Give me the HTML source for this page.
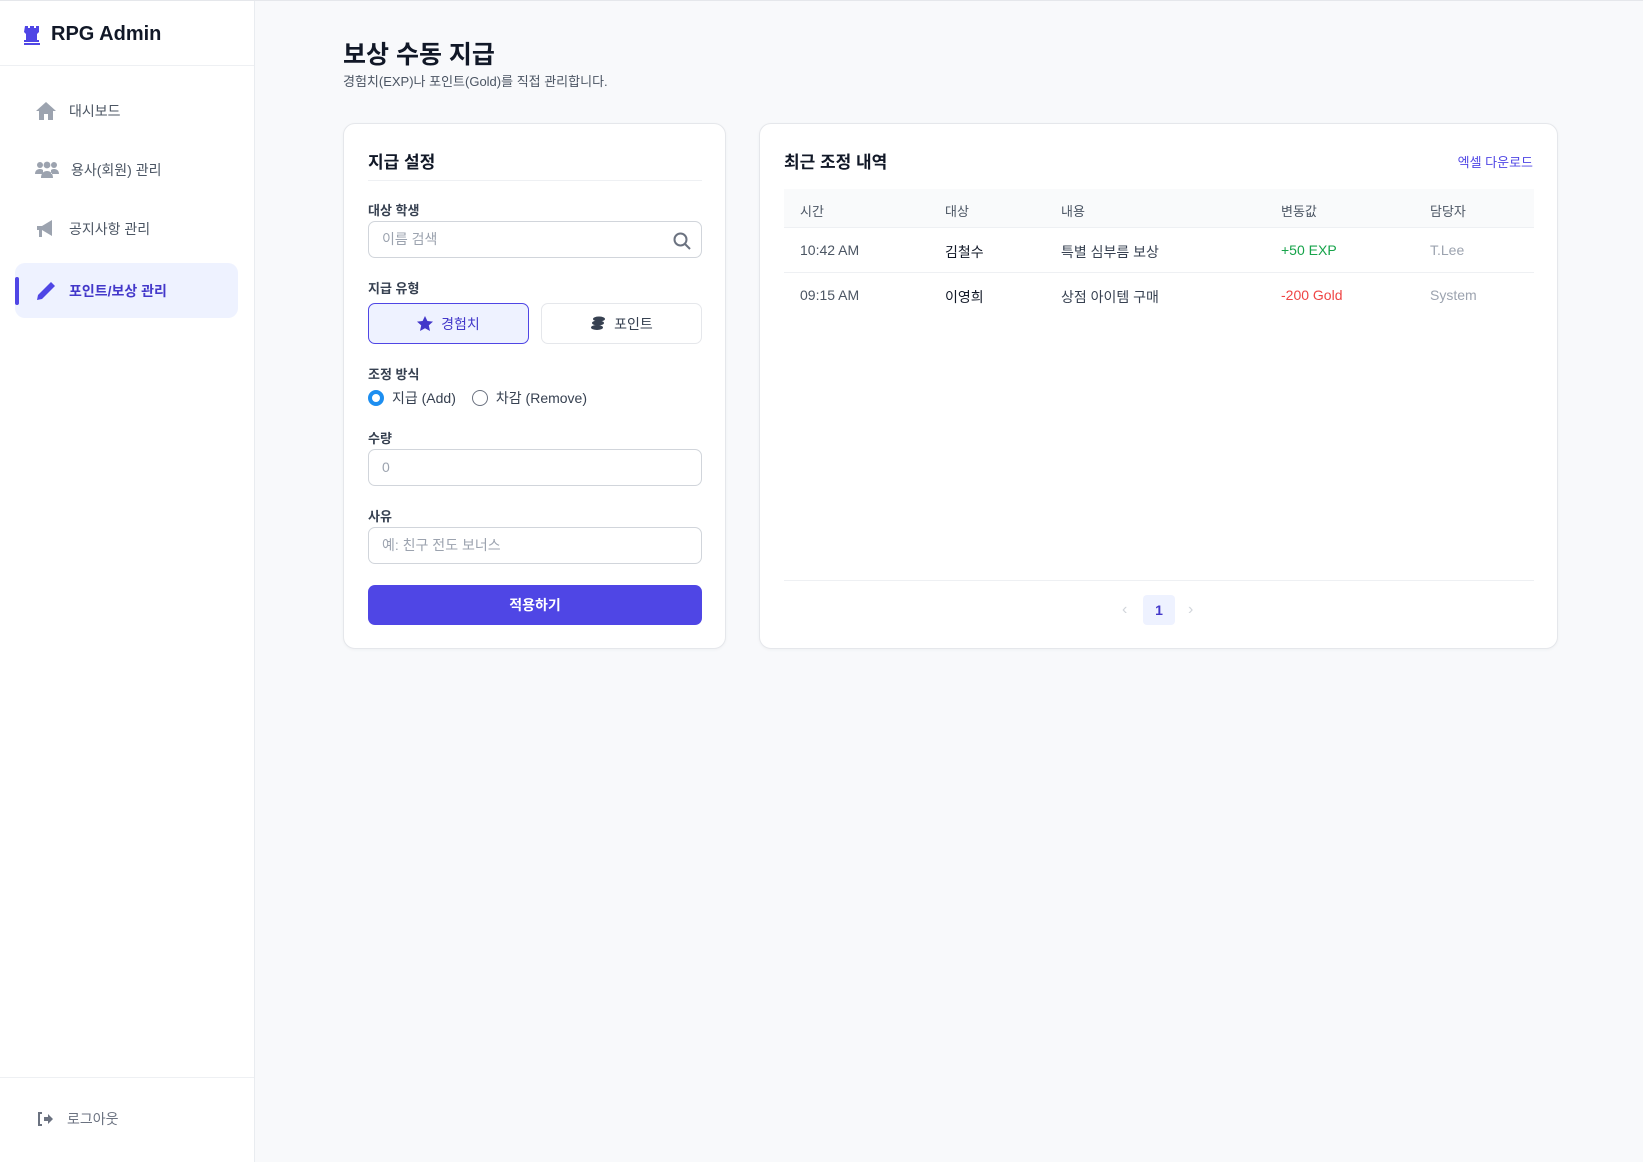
<!DOCTYPE html>
<html><head><meta charset="utf-8"><style>
*{box-sizing:border-box;margin:0;padding:0}
body{width:1643px;height:1161px;background:#f8f9fb;font-family:"Liberation Sans","Noto Sans CJK KR",sans-serif;color:#1f2937;position:relative;overflow:hidden;border-top:1px solid #e5e7eb}
.side{position:absolute;left:0;top:0;width:255px;height:1161px;background:#fff;border-right:1px solid #e9ecf0}
.logo{position:absolute;left:23px;top:22px;font-size:20px;font-weight:700;color:#111827;display:flex;align-items:center;gap:10px}
.hline{position:absolute;left:0;width:254px;height:1px;background:#eef0f3}
.nav{position:absolute;left:15px;width:223px;height:55px;display:flex;align-items:center;padding-left:20px;gap:12px;font-size:14px;color:#4b5563}
.nav.act{background:#eef2ff;color:#4338ca;font-weight:700;border-radius:10px}
.nav.act:before{content:"";position:absolute;left:0;top:14px;width:4px;height:28px;background:#4f46e5;border-radius:2px}
.abs{position:absolute}
.card{position:absolute;background:#fff;border:1px solid #e5e7eb;border-radius:12px;box-shadow:0 1px 3px rgba(0,0,0,.04)}
.lbl{position:absolute;left:24px;font-size:13px;font-weight:700;color:#374151}
.inp{position:absolute;left:24px;width:334px;height:37px;border:1px solid #d1d5db;border-radius:7px;font-size:14px;color:#9ca3af;padding-left:13px;line-height:35px}
.th{position:absolute;font-size:13px;color:#4b5563;top:12px}
.td{position:absolute;font-size:14px}
</style></head><body>
<div class="side">
 <div class="logo"><svg width="18" height="20" viewBox="0 0 18 20"><path d="M2 1h3v2h2V1h4v2h2V1h3v6l-2 2v6h2v2H1v-2h2V9L1 7z" fill="#4f46e5"/><rect x="1" y="18" width="16" height="2" fill="#4f46e5"/></svg>RPG Admin</div>
 <div class="hline" style="top:64px"></div>
 <div class="nav" style="top:82px"><svg width="22" height="20" viewBox="0 0 22 20"><path d="M11 1L1 10h3v9h5v-6h4v6h5v-9h3z" fill="#9ca3af"/></svg>대시보드</div>
 <div class="nav" style="top:141px"><svg width="24" height="18" viewBox="0 0 24 18"><circle cx="5" cy="4" r="3" fill="#9ca3af"/><circle cx="12" cy="4" r="3.4" fill="#9ca3af"/><circle cx="19" cy="4" r="3" fill="#9ca3af"/><path d="M0 13c0-4 3-5 5-5s3 1 3 1v4zM6 17c0-5 3-7 6-7s6 2 6 7zM24 13c0-4-3-5-5-5s-3 1-3 1v4z" fill="#9ca3af"/></svg>용사(회원) 관리</div>
 <div class="nav" style="top:200px"><svg width="22" height="20" viewBox="0 0 22 20"><path d="M2 7h5l10-6v16L7 11v7H4v-7H2z" fill="#9ca3af"/></svg>공지사항 관리</div>
 <div class="nav act" style="top:262px"><svg width="22" height="22" viewBox="0 0 22 22"><path d="M16 2l4 4L7 19l-5 1 1-5z" fill="#4f46e5"/></svg>포인트/보상 관리</div>
 <div class="hline" style="top:1076px"></div>
 <div class="nav" style="top:1090px;color:#6b7280;padding-left:22px;gap:14px"><svg width="16" height="14" viewBox="0 0 16 14"><path d="M5 1H2v12h3" stroke="#6b7280" stroke-width="2" fill="none"/><path d="M7 5h4V2l5 5-5 5V9H7z" fill="#6b7280"/></svg>로그아웃</div>
</div>
<div class="abs" style="left:343px;top:34px;font-size:25px;font-weight:700;color:#111827">보상 수동 지급</div>
<div class="abs" style="left:343px;top:70px;font-size:13px;color:#4b5563">경험치(EXP)나 포인트(Gold)를 직접 관리합니다.</div>

<div class="card" style="left:343px;top:122px;width:383px;height:526px">
 <div class="abs" style="left:24px;top:24px;font-size:17px;font-weight:700;color:#111827">지급 설정</div>
 <div class="abs" style="left:24px;top:56px;width:334px;height:1px;background:#eef0f3"></div>
 <div class="lbl" style="top:76px">대상 학생</div>
 <div class="inp" style="top:97px">이름 검색<svg class="abs" style="right:10px;top:10px" width="18" height="18" viewBox="0 0 18 18"><circle cx="7.5" cy="7.5" r="6" stroke="#6b7280" stroke-width="2" fill="none"/><path d="M12 12l5 5" stroke="#6b7280" stroke-width="2"/></svg></div>
 <div class="lbl" style="top:154px">지급 유형</div>
 <div class="abs" style="left:24px;top:179px;width:161px;height:41px;border:1px solid #4f46e5;background:#eef2ff;border-radius:7px;display:flex;align-items:center;justify-content:center;gap:8px;font-size:14px;color:#4338ca"><svg width="16" height="15" viewBox="0 0 16 15"><path d="M8 0l2.4 5 5.6.6-4.2 3.8 1.2 5.6L8 12.2 3 15l1.2-5.6L0 5.6 5.6 5z" fill="#4338ca"/></svg>경험치</div>
 <div class="abs" style="left:197px;top:179px;width:161px;height:41px;border:1px solid #e5e7eb;border-radius:7px;display:flex;align-items:center;justify-content:center;gap:8px;font-size:14px;color:#374151"><svg width="16" height="15" viewBox="0 0 16 15"><ellipse cx="9" cy="3" rx="6" ry="2.5" fill="#374151"/><ellipse cx="8" cy="7" rx="6" ry="2.5" fill="#374151"/><ellipse cx="7" cy="11.5" rx="6" ry="2.5" fill="#374151"/></svg>포인트</div>
 <div class="lbl" style="top:240px">조정 방식</div>
 <div class="abs" style="left:24px;top:264px;font-size:14px;color:#374151;display:flex;align-items:center">
  <span style="width:16px;height:16px;border-radius:50%;border:4px solid #1d8ef0;margin-right:8px"></span>지급 (Add)
  <span style="width:16px;height:16px;border-radius:50%;border:1px solid #6b7280;margin:0 8px 0 16px"></span>차감 (Remove)</div>
 <div class="lbl" style="top:304px">수량</div>
 <div class="inp" style="top:325px">0</div>
 <div class="lbl" style="top:382px">사유</div>
 <div class="inp" style="top:403px">예: 친구 전도 보너스</div>
 <div class="abs" style="left:24px;top:461px;width:334px;height:40px;background:#4f46e5;border-radius:7px;color:#fff;font-size:14px;font-weight:700;text-align:center;line-height:40px">적용하기</div>
</div>

<div class="card" style="left:759px;top:122px;width:799px;height:526px">
 <div class="abs" style="left:24px;top:24px;font-size:17px;font-weight:700;color:#111827">최근 조정 내역</div>
 <div class="abs" style="right:24px;top:28px;font-size:13px;color:#4f46e5">엑셀 다운로드</div>
 <div class="abs" style="left:24px;top:65px;width:750px;height:39px;background:#f9fafb;border-bottom:1px solid #eef0f3">
  <div class="th" style="left:16px">시간</div><div class="th" style="left:161px">대상</div><div class="th" style="left:277px">내용</div><div class="th" style="left:497px">변동값</div><div class="th" style="left:646px">담당자</div>
 </div>
 <div class="abs" style="left:24px;top:104px;width:750px;height:45px;border-bottom:1px solid #eef0f3"></div>
 <div class="td" style="left:40px;top:118px;color:#4b5563">10:42 AM</div><div class="td" style="left:185px;top:118px;color:#111827">김철수</div><div class="td" style="left:301px;top:118px;color:#374151">특별 심부름 보상</div><div class="td" style="left:521px;top:118px;color:#16a34a">+50 EXP</div><div class="td" style="left:670px;top:118px;color:#9ca3af">T.Lee</div>
 <div class="td" style="left:40px;top:163px;color:#4b5563">09:15 AM</div><div class="td" style="left:185px;top:163px;color:#111827">이영희</div><div class="td" style="left:301px;top:163px;color:#374151">상점 아이템 구매</div><div class="td" style="left:521px;top:163px;color:#ef4444">-200 Gold</div><div class="td" style="left:670px;top:163px;color:#9ca3af">System</div>
 <div class="abs" style="left:24px;top:456px;width:750px;height:1px;background:#eef0f3"></div>
 <div class="abs" style="left:362px;top:477px;color:#d1d5db;font-size:16px">‹</div>
 <div class="abs" style="left:383px;top:471px;width:32px;height:30px;background:#eef2ff;border-radius:4px;color:#4338ca;font-size:14px;font-weight:700;text-align:center;line-height:30px">1</div>
 <div class="abs" style="left:428px;top:477px;color:#d1d5db;font-size:16px">›</div>
</div>
</body></html>
